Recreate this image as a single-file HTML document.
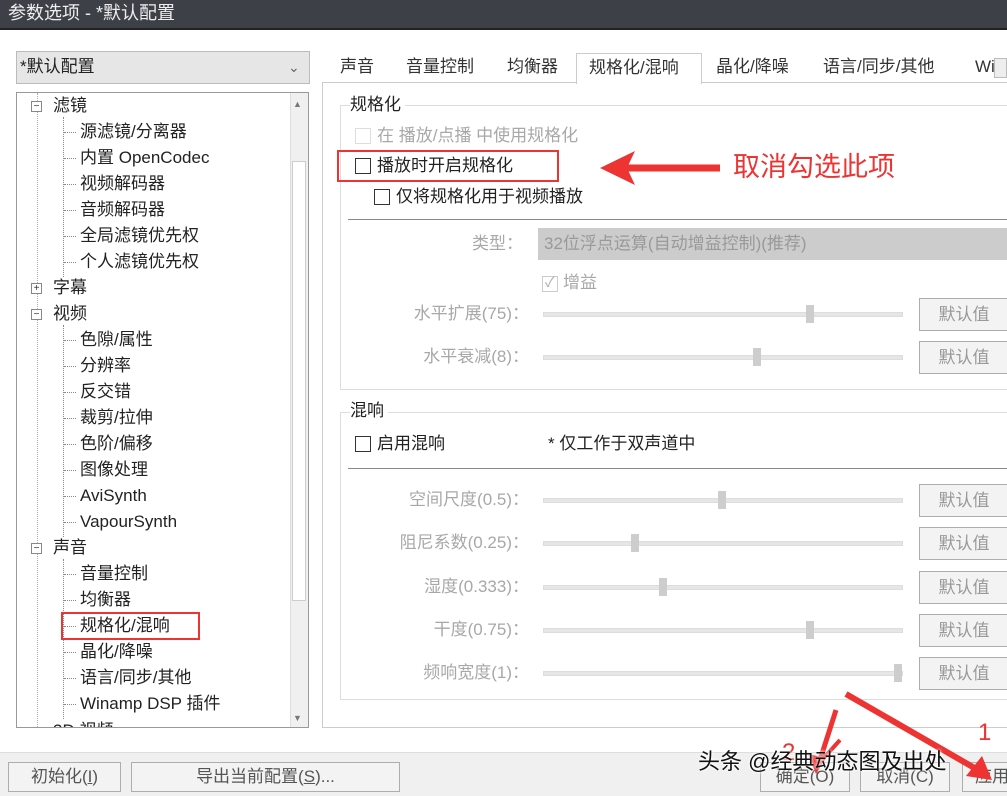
<!DOCTYPE html>
<html><head><meta charset="utf-8"><style>
*{margin:0;padding:0;box-sizing:border-box}
body{width:1007px;height:796px;overflow:hidden;background:#fff;font-family:"Liberation Sans","Noto Sans CJK SC",sans-serif;font-size:17px;color:#222;position:relative}
.a{position:absolute;white-space:nowrap;line-height:22px}
.g{color:#a8a8a8}
.cb{position:absolute;width:16px;height:16px;border:1.5px solid #333;background:#fff}
.btn{position:absolute;border:1px solid #adadad;background:#f3f3f3;text-align:center;color:#999;font-size:17px}
.tr{position:absolute;height:5px;background:#e6e6e6;border:1px solid #ddd;left:543px;width:360px}
.th{position:absolute;width:8px;height:18px;background:#cdcdcd}
.dl{position:absolute;border-top:1px dotted #888;width:12px}
</style></head><body>
<div class="a" style="left:0;top:0;width:1007px;height:28px;background:#3d4047;color:#eee;font-size:18px;line-height:26px;padding-left:8px">参数选项 - *默认配置</div>
<div style="position:absolute;left:0;top:28px;width:1007px;height:2px;background:#222"></div>
<div style="position:absolute;left:16px;top:51px;width:294px;height:33px;background:#e6e6e6;border:1px solid #bbb"></div>
<div class="a" style="left:20px;top:56px">*默认配置</div>
<div class="a" style="left:288px;top:56px;color:#666;font-size:14px">&#8964;</div>
<div style="position:absolute;left:16px;top:92px;width:293px;height:636px;border:1px solid #999;background:#fff;overflow:hidden">
<div style="position:absolute;left:273px;top:0;width:18px;height:634px;background:#f0f0f0;border-left:1px solid #ddd"></div>
<div style="position:absolute;left:275px;top:68px;width:14px;height:440px;background:#fff;border:1px solid #ccc"></div>
<div class="a" style="left:276px;top:0;font-size:9px;color:#777">▲</div>
<div class="a" style="left:276px;top:614px;font-size:9px;color:#777">▼</div>
<div style="position:absolute;left:46px;top:24px;height:160px;border-left:1px dotted #888"></div>
<div style="position:absolute;left:46px;top:232px;height:212px;border-left:1px dotted #888"></div>
<div style="position:absolute;left:46px;top:466px;height:160px;border-left:1px dotted #888"></div>
<div style="position:absolute;left:20px;top:0;height:634px;border-left:1px dotted #aaa"></div>
<div class="a" style="left:36px;top:627px">3D 视频</div>
</div>
<div id="tree"></div>
<div style="position:absolute;left:322px;top:82px;width:690px;height:646px;border:1px solid #ccc;background:#fff"></div>
<div style="position:absolute;left:576px;top:53px;width:126px;height:31px;border:1px solid #ccc;border-bottom:none;background:#fff"></div>
<div class="a" style="left:340px;top:56px;color:#333">声音</div>
<div class="a" style="left:406px;top:56px;color:#333">音量控制</div>
<div class="a" style="left:507px;top:56px;color:#333">均衡器</div>
<div class="a" style="left:589px;top:57px;color:#333">规格化/混响</div>
<div class="a" style="left:716px;top:56px;color:#333">晶化/降噪</div>
<div class="a" style="left:823px;top:56px;color:#333">语言/同步/其他</div>
<div class="a" style="left:975px;top:56px;color:#333">Wi</div>
<div style="position:absolute;left:994px;top:58px;width:13px;height:20px;border:1px solid #bbb;background:#eee"></div>
<div style="position:absolute;left:340px;top:105px;width:680px;height:285px;border:1px solid #ddd"></div>
<div class="a" style="left:350px;top:94px;background:#fff;padding-right:4px">规格化</div>
<div class="cb" style="left:355px;top:128px;border-color:#ddd"></div>
<div class="a g" style="left:377px;top:125px">在 播放/点播 中使用规格化</div>
<div style="position:absolute;left:337px;top:150px;width:222px;height:32px;border:2.5px solid #e33"></div>
<div class="cb" style="left:355px;top:158px"></div>
<div class="a" style="left:377px;top:155px">播放时开启规格化</div>
<div class="cb" style="left:374px;top:189px"></div>
<div class="a" style="left:396px;top:186px">仅将规格化用于视频播放</div>
<div style="position:absolute;left:348px;top:219px;width:660px;border-top:1px solid #888"></div>
<div class="a g" style="left:472px;top:233px">类型：</div>
<div style="position:absolute;left:538px;top:228px;width:470px;height:32px;background:#ccc"></div>
<div class="a g" style="left:544px;top:233px;color:#999">32位浮点运算(自动增益控制)(推荐)</div>
<div class="cb" style="left:542px;top:276px;border-color:#ccc"></div>
<div class="a g" style="left:545px;top:271px;color:#aaa;font-size:14px">✓</div>
<div class="a g" style="left:563px;top:272px">增益</div>
<svg style="position:absolute;left:595px;top:145px" width="130" height="46"><path d="M125 23 H30" stroke="#e33" stroke-width="7"/><path d="M5 23 L40 6 L32 23 L40 40 Z" fill="#e33"/></svg>
<div class="a" style="left:733px;top:151px;color:#e33;font-size:27px;line-height:32px">取消勾选此项</div>
<div style="position:absolute;left:340px;top:412px;width:680px;height:288px;border:1px solid #ddd"></div>
<div class="a" style="left:350px;top:400px;background:#fff;padding-right:4px">混响</div>
<div class="cb" style="left:355px;top:436px"></div>
<div class="a" style="left:377px;top:433px">启用混响</div>
<div class="a" style="left:548px;top:433px">* 仅工作于双声道中</div>
<div style="position:absolute;left:348px;top:468px;width:660px;border-top:1px solid #888"></div>
<div id="sl"></div>
<div style="position:absolute;left:0;top:752px;width:1007px;height:44px;background:#f0f0f0;border-top:1px solid #ddd"></div>
<div class="btn" style="left:8px;top:762px;width:113px;height:30px;line-height:28px;color:#555">初始化(<u>I</u>)</div>
<div class="btn" style="left:131px;top:762px;width:269px;height:30px;line-height:28px;color:#555">导出当前配置(<u>S</u>)...</div>
<div class="btn" style="left:760px;top:762px;width:90px;height:30px;line-height:28px;color:#555">确定(O)</div>
<div class="btn" style="left:860px;top:762px;width:90px;height:30px;line-height:28px;color:#555">取消(C)</div>
<div class="btn" style="left:962px;top:762px;width:60px;height:30px;line-height:28px;color:#555">应用</div>
<svg style="position:absolute;left:760px;top:680px" width="247" height="116">
<path d="M86 14 L218 90" stroke="#e33" stroke-width="6"/><path d="M232 100 L206 96 L222 76 Z" fill="#e33"/>
<path d="M76 30 L60 80" stroke="#e33" stroke-width="5"/><path d="M56 94 L48 74 L66 78 Z" fill="#e33"/>
<path d="M62 80 L80 60" stroke="#e33" stroke-width="4"/>
<text x="218" y="60" fill="#e33" font-size="24" font-family="Liberation Sans">1</text>
<text x="22" y="80" fill="#e33" font-size="24" font-family="Liberation Sans">2</text>
</svg>
<div class="a" style="left:698px;top:748px;font-size:22px;line-height:28px;color:#111;text-shadow:0 0 3px #fff,0 0 3px #fff">头条 @经典动态图及出处</div>
<script>
var t=[["滤镜",106,0],["源滤镜/分离器",132,1],["内置 OpenCodec",158,1],["视频解码器",184,1],["音频解码器",210,1],["全局滤镜优先权",236,1],["个人滤镜优先权",262,1],["字幕",288,0],["视频",314,0],["色隙/属性",340,1],["分辨率",366,1],["反交错",392,1],["裁剪/拉伸",418,1],["色阶/偏移",444,1],["图像处理",470,1],["AviSynth",496,1],["VapourSynth",522,1],["声音",548,0],["音量控制",574,1],["均衡器",600,1],["规格化/混响",626,1],["晶化/降噪",652,1],["语言/同步/其他",678,1],["Winamp DSP 插件",704,1]];
var h="";t.forEach(function(r){var x=r[2]?80:53;
h+='<div class="a" style="left:'+x+'px;top:'+(r[1]-11)+'px">'+r[0]+'</div>';
if(r[2])h+='<div class="dl" style="left:64px;top:'+r[1]+'px"></div>';
else h+='<div style="position:absolute;left:31px;top:'+(r[1]-5)+'px;width:11px;height:11px;border:1px solid #888;background:#fff;font-size:10px;line-height:9px;text-align:center;color:#333">'+(r[0]=="字幕"?"+":"−")+'</div>';});
h+='<div style="position:absolute;left:61px;top:612px;width:139px;height:28px;border:2.5px solid #e33"></div>';
document.getElementById("tree").outerHTML=h;
var s=[["水平扩展(75)：",314,810],["水平衰减(8)：",357,757],["空间尺度(0.5)：",500,722],["阻尼系数(0.25)：",543,635],["湿度(0.333)：",587,663],["干度(0.75)：",630,810],["频响宽度(1)：",673,898]];
var o="";s.forEach(function(r){o+='<div class="a g" style="right:478px;top:'+(r[1]-11)+'px">'+r[0]+'</div><div class="tr" style="top:'+(r[1]-2)+'px"></div><div class="th" style="left:'+(r[2]-4)+'px;top:'+(r[1]-9)+'px"></div><div class="btn" style="left:919px;top:'+(r[1]-16)+'px;width:90px;height:33px;line-height:31px">默认值</div>';});
document.getElementById("sl").outerHTML=o;
</script>
</body></html>
